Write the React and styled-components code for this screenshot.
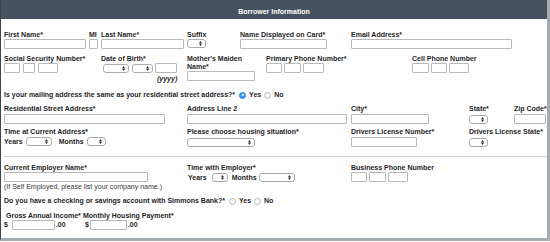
import React from "react";
import styled, { createGlobalStyle } from "styled-components";

const GlobalStyle = createGlobalStyle`
  body {
    margin: 0;
    background: #fff;
    font-family: "Liberation Sans", Arial, sans-serif;
  }
`;

const Panel = styled.div`
  box-sizing: border-box;
  width: 550px;
  height: 241px;
  border-left: 1px solid #3d4650;
  border-right: 3px solid #a3abb3;
  border-bottom: 3px solid #a3abb3;
  background: #fff;
  color: #1f1f1f;
  font-size: 7px;
  font-weight: 700;
  line-height: 8px;
`;

const Header = styled.div`
  box-sizing: border-box;
  height: 19px;
  padding-top: 4px;
  background: #47525f;
  color: #fff;
  display: flex;
  align-items: center;
  justify-content: center;
`;

const Body = styled.div`
  padding: 12px 0 0 3px;
`;

const Row = styled.div`
  display: flex;
  align-items: flex-start;
  margin-top: ${(p) => p.$mt || 0}px;
`;

const Field = styled.div`
  display: flex;
  flex-direction: column;
  align-items: flex-start;
  flex: none;
  width: ${(p) => (p.$w ? `${p.$w}px` : "auto")};
  padding-left: ${(p) => p.$pl || 0}px;
  box-sizing: border-box;
`;

const Label = styled.div`
  white-space: ${(p) => (p.$wrap ? "normal" : "nowrap")};
  max-width: ${(p) => (p.$max ? `${p.$max}px` : "none")};
`;

const Input = styled.input`
  box-sizing: border-box;
  display: block;
  width: ${(p) => p.$w}px;
  height: 10px;
  margin: ${(p) => p.$mt || 0}px 0 0 ${(p) => p.$ml || 0}px;
  padding: 0;
  border: 1px solid #b9b9b9;
  border-radius: 1px;
  background: #fff;
  flex: none;
`;

const SelectBox = styled.div`
  box-sizing: border-box;
  width: ${(p) => p.$w}px;
  height: 9px;
  margin: ${(p) => p.$mt || 0}px 0 0 ${(p) => p.$ml || 0}px;
  border: 1px solid #ababab;
  border-radius: 3px;
  background: #fff;
  display: flex;
  align-items: center;
  justify-content: flex-end;
  padding-right: 3px;
  flex: none;
`;

const Inline = styled.div`
  display: flex;
  align-items: center;
  gap: ${(p) => p.$gap || 0}px;
  margin-top: ${(p) => p.$mt || 0}px;
`;

const Text = styled.span`
  margin-left: ${(p) => p.$ml || 0}px;
  font-style: ${(p) => (p.$italic ? "italic" : "normal")};
  white-space: nowrap;
`;

const Note = styled.div`
  font-weight: 400;
  color: #3a3a3a;
  margin-top: 1px;
  white-space: nowrap;
`;

const Rule = styled.div`
  margin-top: 9px;
  border-top: 1px solid #cfcfcf;
`;

const RadioDot = styled.span`
  box-sizing: border-box;
  width: 7px;
  height: 7px;
  border-radius: 50%;
  margin-left: ${(p) => p.$ml || 0}px;
  border: 1px solid ${(p) => (p.$on ? "#2f86e6" : "#b8b8b8")};
  background: ${(p) => (p.$on ? "#3c98f5" : "#fbfbfb")};
  display: inline-flex;
  align-items: center;
  justify-content: center;
  flex: none;

  &::after {
    content: "";
    width: 2px;
    height: 2px;
    border-radius: 50%;
    background: ${(p) => (p.$on ? "#fff" : "transparent")};
  }
`;

const Select = ({ w, mt, ml }) => (
  <SelectBox $w={w} $mt={mt} $ml={ml}>
    <svg width="3" height="5" viewBox="0 0 4 7">
      <path d="M0 3 L2 0 L4 3Z M0 4 L2 7 L4 4Z" fill="#222" />
    </svg>
  </SelectBox>
);

const Boxes = ({ widths, gap = 2 }) => (
  <Inline $gap={gap}>
    {widths.map((w, i) => (
      <Input key={i} $w={w} />
    ))}
  </Inline>
);

const YesNo = ({ on }) => (
  <>
    <RadioDot $on={on === "yes"} $ml={4} />
    <Text $ml={3}>Yes</Text>
    <RadioDot $on={on === "no"} $ml={3} />
    <Text $ml={3}>No</Text>
  </>
);

export default function App() {
  return (
    <>
      <GlobalStyle />
      <Panel>
        <Header>Borrower Information</Header>
        <Body>
          <Row>
            <Field $w={85}>
              <Label>First Name*</Label>
              <Input $w={82} />
            </Field>
            <Field $w={12}>
              <Label>MI</Label>
              <Input $w={9} />
            </Field>
            <Field $w={86}>
              <Label>Last Name*</Label>
              <Input $w={83} />
            </Field>
            <Field $w={53}>
              <Label>Suffix</Label>
              <Select w={19} />
            </Field>
            <Field $w={111}>
              <Label>Name Displayed on Card*</Label>
              <Input $w={87} />
            </Field>
            <Field>
              <Label>Email Address*</Label>
              <Input $w={161} />
            </Field>
          </Row>

          <Row $mt={6}>
            <Field $w={97}>
              <Label>Social Security Number*</Label>
              <Boxes widths={[16, 12, 20]} gap={3} />
            </Field>
            <Field $w={86}>
              <Label>Date of Birth*</Label>
              <Inline>
                <Select w={26} ml={2} />
                <Select w={21} ml={3} />
                <Input $w={22} $ml={2} />
              </Inline>
              <Inline $mt={2}>
                <Text $ml={56} $italic>(yyyy)</Text>
              </Inline>
            </Field>
            <Field $w={79}>
              <Label $wrap $max={68}>Mother's Maiden Name*</Label>
              <Input $w={68} />
            </Field>
            <Field $w={146}>
              <Label>Primary Phone Number*</Label>
              <Boxes widths={[16, 17, 21]} />
            </Field>
            <Field>
              <Label>Cell Phone Number</Label>
              <Boxes widths={[17, 16, 20]} />
            </Field>
          </Row>

          <Inline $mt={8}>
            <Text>Is your mailing address the same as your residential street address?*</Text>
            <YesNo on="yes" />
          </Inline>

          <Row $mt={6}>
            <Field $w={183}>
              <Label>Residential Street Address*</Label>
              <Input $w={161} $mt={1} />
            </Field>
            <Field $w={164}>
              <Label>Address Line 2</Label>
              <Input $w={160} $mt={1} />
            </Field>
            <Field $w={118}>
              <Label>City*</Label>
              <Input $w={78} $mt={1} />
            </Field>
            <Field $w={45}>
              <Label>State*</Label>
              <Select w={19} mt={2} />
            </Field>
            <Field>
              <Label>Zip Code*</Label>
              <Input $w={32} $mt={1} />
            </Field>
          </Row>

          <Row $mt={4}>
            <Field $w={183}>
              <Label>Time at Current Address*</Label>
              <Inline $mt={1}>
                <Text>Years</Text>
                <Select w={26} ml={3} />
                <Text $ml={7}>Months</Text>
                <Select w={19} ml={3} />
              </Inline>
            </Field>
            <Field $w={164}>
              <Label>Please choose housing situation*</Label>
              <Select w={68} mt={2} />
            </Field>
            <Field $w={118}>
              <Label>Drivers License Number*</Label>
              <Input $w={66} $mt={1} />
            </Field>
            <Field>
              <Label>Drivers License State*</Label>
              <Select w={19} mt={2} />
            </Field>
          </Row>

          <Rule />

          <Row $mt={7}>
            <Field $w={183}>
              <Label>Current Employer Name*</Label>
              <Input $w={144} />
              <Note>(If Self Employed, please list your company name.)</Note>
            </Field>
            <Field $w={164}>
              <Label>Time with Employer*</Label>
              <Inline $mt={1}>
                <Text $ml={1}>Years</Text>
                <Select w={16} ml={5} />
                <Text $ml={4}>Months</Text>
                <Select w={36} ml={2} />
              </Inline>
            </Field>
            <Field>
              <Label>Business Phone Number</Label>
              <Boxes widths={[16, 17, 20]} />
            </Field>
          </Row>

          <Inline $mt={6}>
            <Text>Do you have a checking or savings account with Simmons Bank?*</Text>
            <YesNo />
          </Inline>

          <Row $mt={7}>
            <Field $w={79} $pl={2}>
              <Label>Gross Annual Income*</Label>
            </Field>
            <Field>
              <Label>Monthly Housing Payment*</Label>
            </Field>
          </Row>
          <Row>
            <Field $w={81}>
              <Inline>
                <Text>$</Text>
                <Input $w={43} $ml={4} />
                <Text $ml={1}>.00</Text>
              </Inline>
            </Field>
            <Field>
              <Inline>
                <Text>$</Text>
                <Input $w={37} $ml={1} />
                <Text $ml={1}>.00</Text>
              </Inline>
            </Field>
          </Row>
        </Body>
      </Panel>
    </>
  );
}
